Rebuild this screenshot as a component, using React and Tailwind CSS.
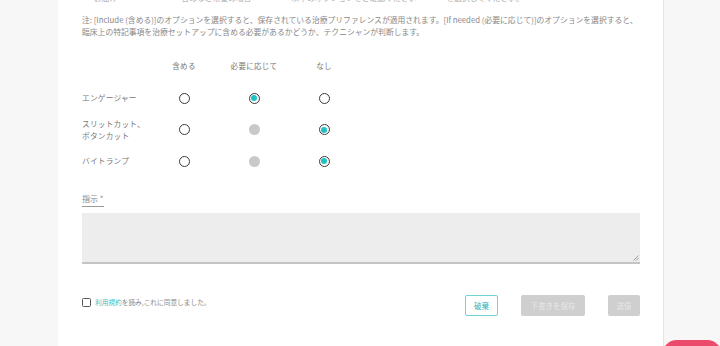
import React from "react";

const font = { fontFamily: '"Noto Sans CJK JP", "Noto Sans", sans-serif' };

function Radio({ state }) {
  if (state === "disabled") {
    return <span className="block w-[11px] h-[11px] rounded-full bg-[#c9c9c9]" />;
  }
  return (
    <span className="flex items-center justify-center w-[11px] h-[11px] rounded-full border-[1.5px] border-[#3a3a3a] bg-white">
      {state === "on" && <span className="block w-[6px] h-[6px] rounded-full bg-[#22c1c3]" />}
    </span>
  );
}

const rows = [
  { label: ["エンゲージャー"], states: ["off", "on", "off"] },
  { label: ["スリットカット、", "ボタンカット"], states: ["off", "disabled", "on"] },
  { label: ["バイトランプ"], states: ["off", "disabled", "on"] },
];

export default function App() {
  return (
    <div className="w-[720px] h-[346px] overflow-hidden bg-[#f7f7f8] relative" style={font}>
      <div className="ml-[58px] w-[606px] h-full bg-white border-r border-[#e6e6e8] pl-[24px] pr-[23px] relative">
        <div className="absolute top-[-8px] left-[36px] text-[7.8px] text-[#aaa] whitespace-nowrap">
          <span className="mr-[64px]">お届け</span>
          <span className="mr-[40px]">含めるご希望の場合</span>
          <span className="mr-[30px]">以下のオプションをご確認ください</span>
          <span>を選択してください。</span>
        </div>
        <div className="pt-[14px] text-[7.8px] leading-[12px] text-[#888] whitespace-nowrap">
          <p>注: [Include (含める)]のオプションを選択すると、保存されている治療プリファレンスが適用されます。[If needed (必要に応じて)]のオプションを選択すると、</p>
          <p>臨床上の特記事項を治療セットアップに含める必要があるかどうか、テクニシャンが判断します。</p>
        </div>
        <div className="mt-[18px] grid grid-cols-[67px_70px_70px_70px] text-[7.5px] text-[#777] tracking-[0.3px]">
          <div className="h-[20px]" />
          <div className="h-[20px] flex justify-center items-center">含める</div>
          <div className="h-[20px] flex justify-center items-center">必要に応じて</div>
          <div className="h-[20px] flex justify-center items-center">なし</div>
        </div>
        <div className="mt-[10px] flex flex-col gap-[7.5px]">
          {rows.map((r, i) => (
            <div key={i} className="grid grid-cols-[67px_70px_70px_70px] h-[24px] items-center text-[7.7px] text-[#777] tracking-[0.2px]">
              <div className="leading-[12px]">
                {r.label.map((l) => (
                  <div key={l} className="whitespace-nowrap">{l}</div>
                ))}
              </div>
              {r.states.map((s, j) => (
                <div key={j} className="flex justify-center">
                  <Radio state={s} />
                </div>
              ))}
            </div>
          ))}
        </div>
        <div className="mt-[10px]">
          <span className="inline-block text-[8px] text-[#888] leading-[12px] pb-[1px] border-b border-[#999]">指示 *</span>
        </div>
        <div className="mt-[6px] h-[51px] bg-[#ededed] border-b-[2px] border-[#c4c4c4] relative">
          <svg className="absolute right-[1px] bottom-[1px]" width="6" height="6" viewBox="0 0 6 6">
            <path d="M5.5 0.5 L0.5 5.5 M5.5 3 L3 5.5" stroke="#888" strokeWidth="0.8" />
          </svg>
        </div>
        <div className="mt-[31px] flex items-center">
          <div className="flex items-center gap-[4px] text-[6.7px] text-[#888] flex-1 -mt-[6px]">
            <span className="w-[9px] h-[9px] border-[1.3px] border-[#555] rounded-[1.5px] bg-white" />
            <span><span className="text-[#3cc4c8]">利用規約</span>を読み,これに同意しました。</span>
          </div>
          <button className="w-[33px] h-[21px] border border-[#6fd3d6] rounded-[2px] text-[7.5px] text-[#2fb8bd] bg-white">破棄</button>
          <button className="ml-[23px] w-[64px] h-[21px] rounded-[2px] text-[7.5px] text-[#e8e8e8] bg-[#cfcfcf]">下書きを保存</button>
          <button className="ml-[23px] w-[32px] h-[21px] rounded-[2px] text-[7.5px] text-[#e8e8e8] bg-[#cfcfcf]">送信</button>
        </div>
      </div>
      <div className="absolute left-[662px] top-[340px] w-[60px] h-[30px] rounded-[15px] bg-[#ec4a6b]" />
    </div>
  );
}
